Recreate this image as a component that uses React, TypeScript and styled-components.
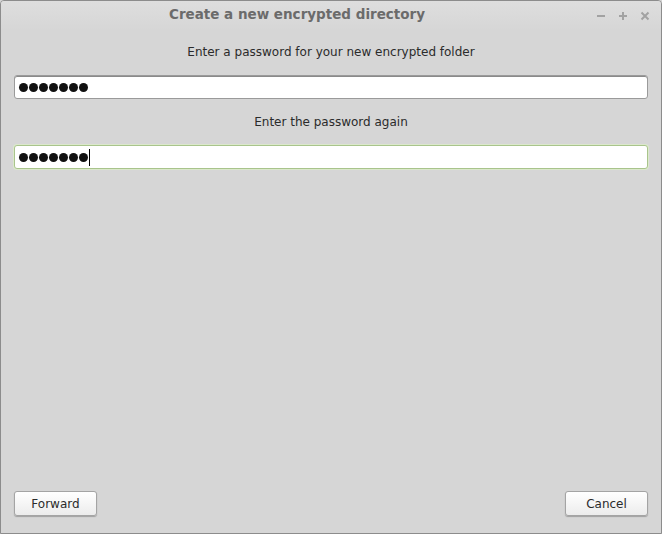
import styled, { createGlobalStyle } from "styled-components";

const GlobalStyle = createGlobalStyle`
  html, body {
    margin: 0;
    padding: 0;
    background: #d6d6d6;
  }
  * {
    box-sizing: border-box;
  }
`;

const Window = styled.div`
  width: 662px;
  height: 534px;
  display: flex;
  flex-direction: column;
  background: #d6d6d6;
  border: 1px solid #8c8c8c;
  border-radius: 4px 4px 0 0;
  font-family: "DejaVu Sans", "Liberation Sans", sans-serif;
  overflow: hidden;
`;

const TitleBar = styled.div`
  height: 29px;
  display: flex;
  align-items: center;
  padding-bottom: 4px;
  background: linear-gradient(#dedede, #d6d6d6);
`;

const Title = styled.div`
  flex: 1;
  text-align: center;
  padding-left: 4px;
  font-size: 13.5px;
  font-weight: bold;
  color: #6b6b6b;
`;

const Controls = styled.div`
  width: 72px;
  display: flex;
  align-items: center;
  justify-content: flex-end;
  gap: 10px;
  padding-right: 10px;
  padding-top: 3px;
`;

const ControlIcon = styled.svg`
  width: 12px;
  height: 12px;
  stroke: #a2a2a2;
  stroke-width: 2;
  fill: none;
`;

const Body = styled.div`
  flex: 1;
  display: flex;
  flex-direction: column;
  padding: 0 13px 17px 13px;
`;

const Label = styled.div<{ $h: number }>`
  height: ${(p) => p.$h}px;
  display: flex;
  align-items: center;
  justify-content: center;
  padding-bottom: 1px;
  font-size: 12px;
  color: #2b2b2b;
`;

const Field = styled.div<{ $focused?: boolean }>`
  height: 24px;
  display: flex;
  align-items: center;
  gap: 1px;
  padding-left: 4px;
  background: #ffffff;
  border: 1px solid ${(p) => (p.$focused ? "#a9c48c" : "#9a9a9a")};
  border-radius: 3px;
  box-shadow: ${(p) =>
    p.$focused ? "0 0 0 1px #dbe8cc" : "inset 0 1px 0 #8a8a8a"};
`;

const Dot = styled.span`
  width: 9px;
  height: 9px;
  border-radius: 50%;
  background: #111111;
`;

const Caret = styled.span`
  width: 1px;
  height: 17px;
  background: #000000;
`;

const Spacer = styled.div`
  flex: 1;
`;

const Footer = styled.div`
  display: flex;
  justify-content: space-between;
`;

const Button = styled.button`
  width: 83px;
  height: 25px;
  font-family: "DejaVu Sans", "Liberation Sans", sans-serif;
  font-size: 12px;
  color: #2b2b2b;
  background: linear-gradient(#ffffff, #ececec);
  border: 1px solid #a4a4a4;
  border-radius: 3px;
  box-shadow: 0 1px 1px rgba(0, 0, 0, 0.25);
  padding: 0;
`;

const PasswordDots = ({ count, focused }: { count: number; focused?: boolean }) => (
  <Field $focused={focused}>
    {Array.from({ length: count }).map((_, i) => (
      <Dot key={i} />
    ))}
    {focused ? <Caret /> : null}
  </Field>
);

export default function App() {
  return (
    <>
      <GlobalStyle />
      <Window>
        <TitleBar>
          <Title>Create a new encrypted directory</Title>
          <Controls>
            <ControlIcon viewBox="0 0 12 12">
              <path d="M2 7h8" />
            </ControlIcon>
            <ControlIcon viewBox="0 0 12 12">
              <path d="M2 7h8M6 3v8" />
            </ControlIcon>
            <ControlIcon viewBox="0 0 12 12">
              <path d="M2.5 3.5l7 7M9.5 3.5l-7 7" />
            </ControlIcon>
          </Controls>
        </TitleBar>
        <Body>
          <Label $h={45}>Enter a password for your new encrypted folder</Label>
          <PasswordDots count={7} />
          <Label $h={46}>Enter the password again</Label>
          <PasswordDots count={7} focused />
          <Spacer />
          <Footer>
            <Button>Forward</Button>
            <Button>Cancel</Button>
          </Footer>
        </Body>
      </Window>
    </>
  );
}
